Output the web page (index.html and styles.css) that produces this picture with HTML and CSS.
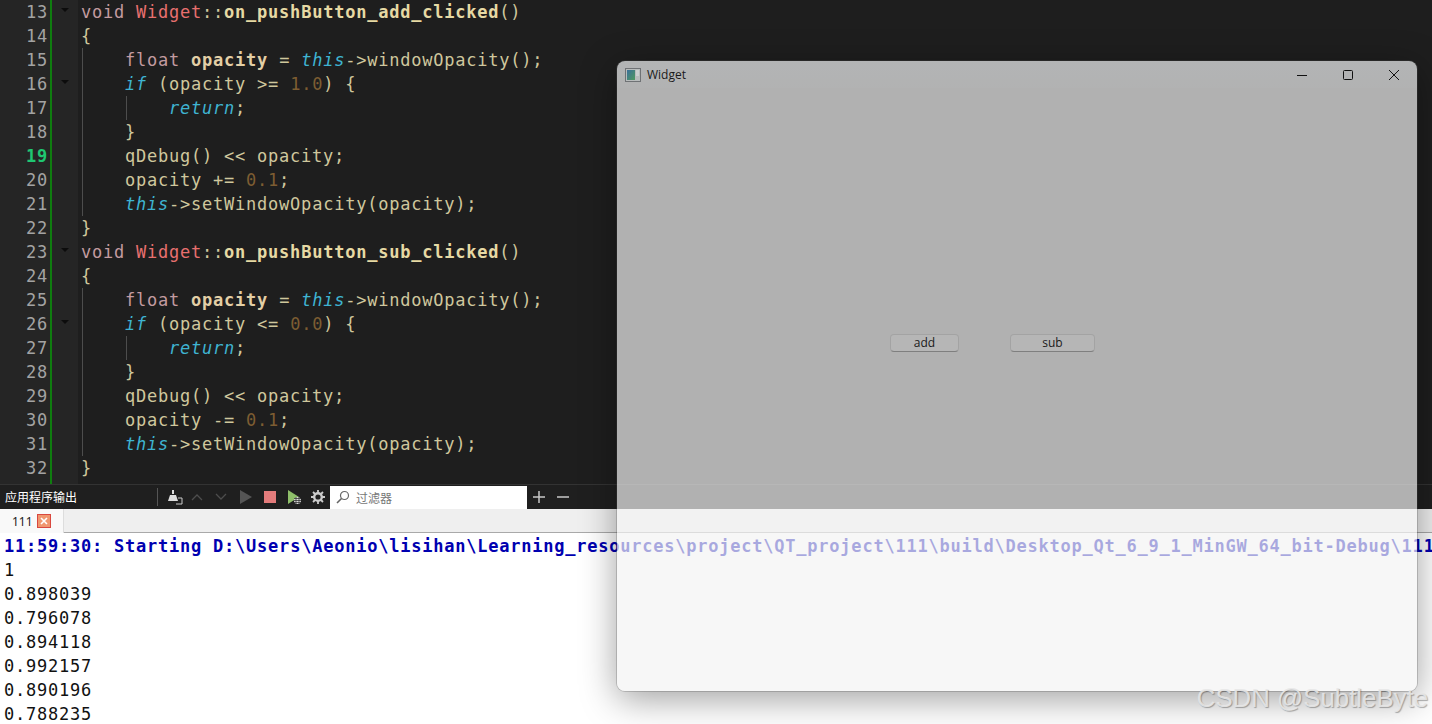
FILE: index.html
```html
<!DOCTYPE html>
<html lang="zh">
<head>
<meta charset="utf-8">
<title>Widget</title>
<link rel="stylesheet" href="styles.css">
</head>
<body>
<div class="app">
  <section class="editor">
    <div class="gutter">
      <div class="gl"><span class="num">13</span><i class="fold"></i></div>
      <div class="gl"><span class="num">14</span></div>
      <div class="gl"><span class="num">15</span></div>
      <div class="gl"><span class="num">16</span><i class="fold"></i></div>
      <div class="gl"><span class="num">17</span></div>
      <div class="gl"><span class="num">18</span></div>
      <div class="gl"><span class="num cur">19</span></div>
      <div class="gl"><span class="num">20</span></div>
      <div class="gl"><span class="num">21</span></div>
      <div class="gl"><span class="num">22</span></div>
      <div class="gl"><span class="num">23</span><i class="fold"></i></div>
      <div class="gl"><span class="num">24</span></div>
      <div class="gl"><span class="num">25</span></div>
      <div class="gl"><span class="num">26</span><i class="fold"></i></div>
      <div class="gl"><span class="num">27</span></div>
      <div class="gl"><span class="num">28</span></div>
      <div class="gl"><span class="num">29</span></div>
      <div class="gl"><span class="num">30</span></div>
      <div class="gl"><span class="num">31</span></div>
      <div class="gl"><span class="num">32</span></div>
    </div>
    <div class="change"></div>
    <div class="foldbar"></div>
    <div class="code">
      <div class="ln"><b class="k">void</b> <b class="t">Widget</b>::<b class="f">on_pushButton_add_clicked</b>()</div>
      <div class="ln">{</div>
      <div class="ln g1">    <b class="k">float</b> <b class="v">opacity</b> = <b class="s">this</b>-&gt;windowOpacity();</div>
      <div class="ln g1">    <b class="s">if</b> (opacity &gt;= <b class="n">1.0</b>) {</div>
      <div class="ln g1 g2">        <b class="s">return</b>;</div>
      <div class="ln g1">    }</div>
      <div class="ln g1">    qDebug() &lt;&lt; opacity;</div>
      <div class="ln g1">    opacity += <b class="n">0.1</b>;</div>
      <div class="ln g1">    <b class="s">this</b>-&gt;setWindowOpacity(opacity);</div>
      <div class="ln">}</div>
      <div class="ln"><b class="k">void</b> <b class="t">Widget</b>::<b class="f">on_pushButton_sub_clicked</b>()</div>
      <div class="ln">{</div>
      <div class="ln g1">    <b class="k">float</b> <b class="v">opacity</b> = <b class="s">this</b>-&gt;windowOpacity();</div>
      <div class="ln g1">    <b class="s">if</b> (opacity &lt;= <b class="n">0.0</b>) {</div>
      <div class="ln g1 g2">        <b class="s">return</b>;</div>
      <div class="ln g1">    }</div>
      <div class="ln g1">    qDebug() &lt;&lt; opacity;</div>
      <div class="ln g1">    opacity -= <b class="n">0.1</b>;</div>
      <div class="ln g1">    <b class="s">this</b>-&gt;setWindowOpacity(opacity);</div>
      <div class="ln">}</div>
    </div>
  </section>

  <section class="toolbar">
    <span class="pane-title">应用程序输出</span>
    <span class="tsep"></span>
    <svg class="ico broom" width="16" height="16" viewBox="0 0 16 16"><path d="M5 1h2v4H5z" fill="#ddd"/><path d="M3 6h6l2 6H1z" fill="#ddd"/><path d="M11 9h4v6H9" fill="none" stroke="#ccc" stroke-width="1"/></svg>
    <svg class="ico up" width="12" height="8" viewBox="0 0 12 8"><path d="M1 7l5-5 5 5" fill="none" stroke="#4d4d4d" stroke-width="1.3"/></svg>
    <svg class="ico down" width="12" height="8" viewBox="0 0 12 8"><path d="M1 1l5 5 5-5" fill="none" stroke="#4d4d4d" stroke-width="1.3"/></svg>
    <svg class="ico play" width="12" height="14" viewBox="0 0 12 14"><path d="M0 0l12 7-12 7z" fill="#555"/></svg>
    <span class="stop"></span>
    <svg class="ico dbg" width="16" height="16" viewBox="0 0 16 16"><path d="M1 1l11 7-11 7z" fill="#8fbf6a"/><circle cx="10.500" cy="11.500" r="3.500" fill="#ddd"/><path d="M7 9.500h7M7 11.500h7M7 13.500h7M9 8v7M12 8v7" stroke="#222" stroke-width=".7"/></svg>
    <svg class="ico gear" width="14" height="14" viewBox="0 0 14 14"><circle cx="7" cy="7" r="3.800" fill="none" stroke="#ccc" stroke-width="2.400"/><path d="M7 0v3M7 11v3M0 7h3M11 7h3M2 2l2 2M10 10l2 2M12 2l-2 2M4 10l-2 2" stroke="#ccc" stroke-width="1.800"/></svg>
    <div class="filter">
      <svg width="14" height="14" viewBox="0 0 14 14"><circle cx="8.500" cy="5.500" r="4" fill="none" stroke="#666" stroke-width="1.200"/><path d="M5.500 8.500L1 13" stroke="#666" stroke-width="1.600"/></svg>
      <span>过滤器</span>
    </div>
    <svg class="ico plus" width="12" height="12" viewBox="0 0 12 12"><path d="M6 0v12M0 6h12" stroke="#c8c8c8" stroke-width="1.500"/></svg>
    <svg class="ico minus" width="12" height="12" viewBox="0 0 12 12"><path d="M0 6h12" stroke="#c8c8c8" stroke-width="1.500"/></svg>
  </section>

  <section class="tabs">
    <div class="tab"><span>111</span>
      <svg width="14" height="14" viewBox="0 0 14 14"><rect x=".5" y=".5" width="13" height="13" fill="#f0966f" stroke="#d9483f"/><path d="M4 4l6 6M10 4l-6 6" stroke="#fff" stroke-width="1.600"/></svg>
    </div>
  </section>

  <section class="output">
    <div class="out-start">11:59:30: Starting D:\Users\Aeonio\lisihan\Learning_resources\project\QT_project\111\build\Desktop_Qt_6_9_1_MinGW_64_bit-Debug\111.exe...</div>
    <div>1</div>
    <div>0.898039</div>
    <div>0.796078</div>
    <div>0.894118</div>
    <div>0.992157</div>
    <div>0.890196</div>
    <div>0.788235</div>
  </section>
</div>

<div class="window">
  <header class="titlebar">
    <svg class="appicon" width="16" height="14" viewBox="0 0 16 14"><defs><linearGradient id="ai" x1="0" y1="0" x2="1" y2="1"><stop offset="0" stop-color="#3b6f9a"/><stop offset="1" stop-color="#4f9a5f"/></linearGradient></defs><rect x=".5" y=".5" width="15" height="13" fill="#b8bcbc" stroke="#6f7275"/><rect x="2" y="2" width="8" height="10" fill="url(#ai)"/><path d="M11 3h3M11 5h3M11 7h3" stroke="#dfe3e3"/></svg>
    <span class="wtitle">Widget</span>
    <div class="wctrls">
      <svg width="12" height="12" viewBox="0 0 12 12"><path d="M1 6.500h10" stroke="#111" stroke-width="1"/></svg>
      <svg width="12" height="12" viewBox="0 0 12 12"><rect x="1.500" y="1.500" width="9" height="9" rx="1" fill="none" stroke="#111" stroke-width="1"/></svg>
      <svg width="12" height="12" viewBox="0 0 12 12"><path d="M1 1l10 10M11 1L1 11" stroke="#111" stroke-width="1"/></svg>
    </div>
  </header>
  <div class="wbody">
    <button class="pb add">add</button>
    <button class="pb sub">sub</button>
  </div>
</div>

<div class="watermark">CSDN @SubtleByte</div>
</body>
</html>
```
FILE: styles.css
```css
* { box-sizing: border-box; }
html, body { margin: 0; height: 100%; }
body { width: 1432px; height: 724px; overflow: hidden; background: #fff; position: relative; }
.app { display: flex; flex-direction: column; height: 724px; overflow: hidden; }

.editor { display: flex; height: 484px; flex: none; background: #1e1e1e; overflow: hidden; }
.gutter { width: 50px; background: #252525; flex: none; }
.gl { height: 24px; position: relative; display: flex; align-items: center; justify-content: flex-end; padding-right: 2px; }
.num { font: 17px/24px "DejaVu Sans Mono", monospace; color: #a3a3a3; letter-spacing: .75px; }
.num.cur { color: #1fc671; font-weight: bold; }
.fold { position: absolute; left: 61px; top: 8px; width: 0; height: 0; border-left: 4px solid transparent; border-right: 4px solid transparent; border-top: 4px solid #0c0c0c; z-index: 1; }
.change { width: 2px; background: #0f7d0f; flex: none; }
.foldbar { width: 26px; background: #252525; flex: none; }
.code { padding-left: 3px; font: 17px/24px "DejaVu Sans Mono", monospace; letter-spacing: .77px; color: #cfc79d; flex: 1; }
.ln { height: 24px; white-space: pre; }
.ln b { font-weight: normal; }
.g1 { background: linear-gradient(#4d4d4d, #4d4d4d) no-repeat 1px 0 / 1px 100%; }
.g1.g2 { background: linear-gradient(#4d4d4d, #4d4d4d) no-repeat 1px 0 / 1px 100%, linear-gradient(#4d4d4d, #4d4d4d) no-repeat 45px 0 / 1px 100%; }
.k { color: #c39ba0; }
.t { color: #e8706f; }
.f { color: #e6d9a4; font-weight: bold !important; }
.v { color: #e3cfa6; font-weight: bold !important; }
.s { color: #3fb4d2; font-style: italic; }
.n { color: #7d5d32; }

.toolbar { height: 25px; flex: none; background: #1f1f1f; border-top: 1px solid #333; display: flex; align-items: center; color: #fff; position: relative; }
.pane-title { font: 12px/24px "Noto Sans CJK SC", sans-serif; width: 157px; padding-left: 5px; flex: none; }
.tsep { width: 1px; height: 18px; background: #555; flex: none; }
.ico { flex: none; display: block; }
.broom { margin-left: 9px; }
.up { margin-left: 8px; }
.down { margin-left: 12px; }
.play { margin-left: 13px; }
.stop { width: 12px; height: 12px; background: #e37b7b; margin-left: 12px; flex: none; }
.dbg { margin-left: 11px; }
.gear { margin-left: 8px; }
.filter { width: 197px; height: 23px; background: #fff; margin-left: 5px; display: flex; align-items: center; gap: 6px; padding-left: 6px; flex: none; color: #777; font: 12px/23px "Noto Sans CJK SC", sans-serif; }
.plus { margin-left: 6px; }
.minus { margin-left: 12px; }

.tabs { height: 24px; flex: none; background: #efefef; border-bottom: 1px solid #a9a9a9; display: flex; }
.tab { width: 64px; height: 24px; background: #f9f9f9; border-right: 1px solid #ddd; display: flex; align-items: center; gap: 4px; padding-left: 12px; font: 12px/23px "Noto Sans", sans-serif; color: #222; }

.output { padding: 1px 0 0 4px; font: 17px/24px "DejaVu Sans Mono", monospace; letter-spacing: .77px; color: #111; white-space: nowrap; overflow: hidden; flex: 1; }
.out-start { color: #0000b0; font-weight: bold; }

.window { position: absolute; left: 617px; top: 61px; width: 800px; height: 630px; border-radius: 8px; background: rgba(244, 244, 244, .69); box-shadow: 0 8px 36px rgba(0, 0, 0, .38), 0 0 0 1px rgba(90, 90, 90, .25); display: flex; flex-direction: column; overflow: hidden; }
.titlebar { height: 27px; flex: none; display: flex; align-items: center; padding: 1px 0 0 8px; background: linear-gradient(rgba(210, 235, 255, .06), rgba(210, 235, 255, .02)); color: #1a1a1a; }
.appicon { flex: none; }
.wtitle { font: 12px/26px "Open Sans", sans-serif; margin-left: 6px; }
.wctrls { margin-left: auto; margin-right: 17px; display: flex; gap: 34px; align-items: center; }
.wctrls svg { display: block; }
.wbody { flex: 1; display: flex; align-items: flex-start; padding: 246px 0 0 273px; gap: 51px; }
.pb { height: 18px; padding: 0; background: rgba(255, 255, 255, .07); border: 1px solid rgba(100, 100, 100, .22); border-bottom-color: rgba(60, 60, 60, .45); border-radius: 4px; font: 12px/16px "Open Sans", sans-serif; color: #1a1a1a; }
.add { width: 69px; }
.sub { width: 85px; }

.watermark { position: absolute; right: 4px; top: 683px; font: 25.800px/30px "Liberation Sans", Arial, sans-serif; color: rgba(232, 232, 232, .9); text-shadow: 1px 1px 1px rgba(0, 0, 0, .3); white-space: nowrap; }
```
